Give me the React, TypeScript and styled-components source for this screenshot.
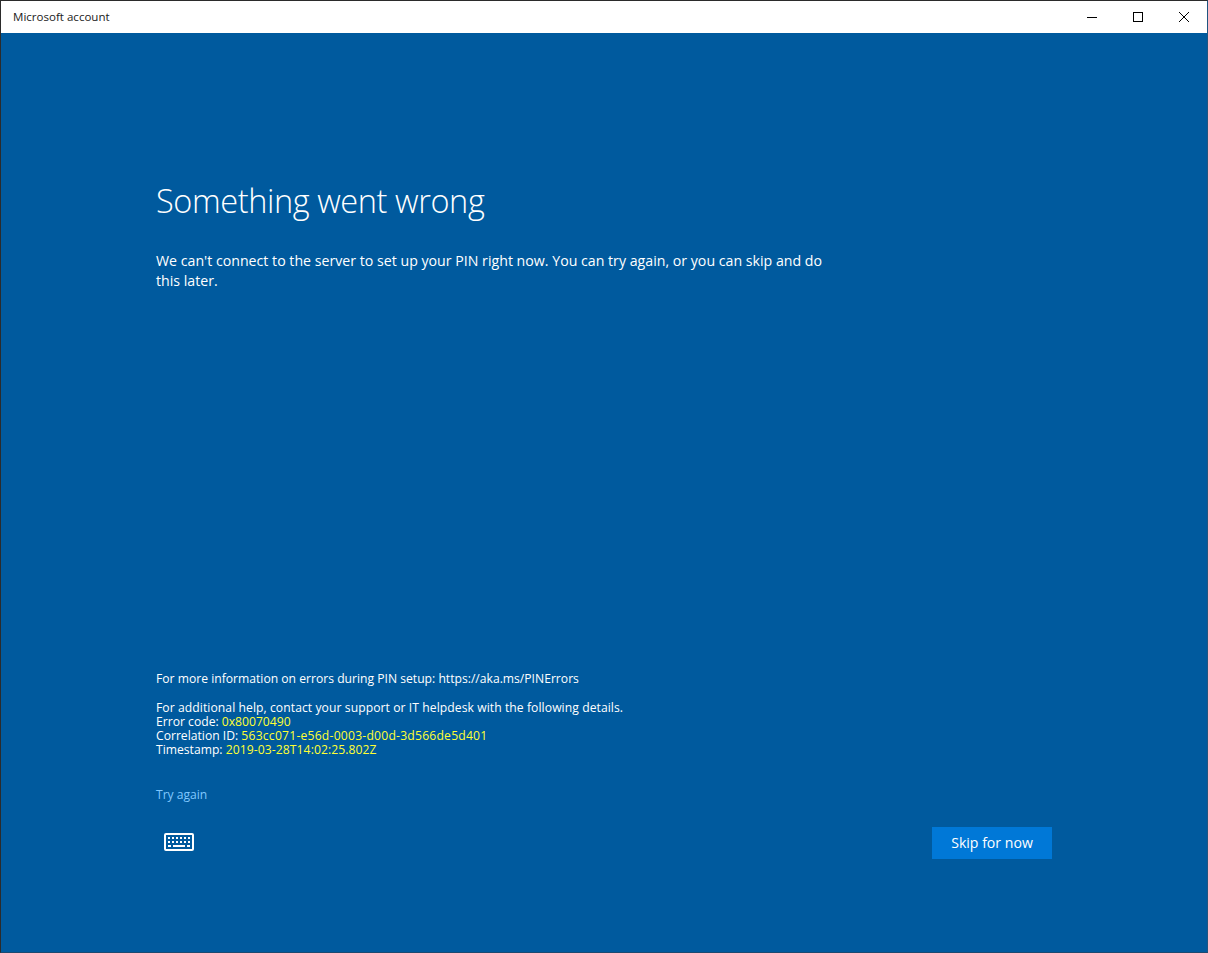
import React from "react";
import styled, { createGlobalStyle } from "styled-components";

const Global = createGlobalStyle`
  html, body { margin: 0; padding: 0; background: #005a9e; }
  #root { width: 1208px; height: 953px; }
`;
const Window = styled.div`
  box-sizing: border-box; width: 1208px; height: 953px; display: flex; flex-direction: column;
  border: 1px solid #2b2b2b; border-bottom-color: #1c4a70; border-right-color: #1f5580;
  font-family: "Open Sans", "Noto Sans", sans-serif; background: #005a9e; overflow: hidden;
`;
const TitleBar = styled.div`
  height: 32px; flex: none; background: #fff; display: flex; align-items: center; justify-content: space-between;
`;
const WindowTitle = styled.span`
  margin-left: 12px; font-size: 11.55px; color: #1a1a1a; line-height: 32px;
`;
const Controls = styled.div`display: flex;`;
const ControlButton = styled.div`
  width: 46px; height: 32px; display: flex; align-items: center; justify-content: center;
`;
const Main = styled.main`
  flex: 1; display: flex; flex-direction: column; padding: 0 155px; color: #fff;
`;
const Heading = styled.h1`
  margin: 145px 0 0; font-size: 32.5px; font-weight: 300; line-height: 46px; letter-spacing: -0.4px; color: #fff;
`;
const Lead = styled.p`
  margin: 26.5px 0 0; width: 680px; font-size: 14.18px; line-height: 20.5px;
`;
const Details = styled.div`
  margin-top: auto; font-size: 12.15px; line-height: 14px;
`;
const DetailGap = styled.div`margin-bottom: 15px;`;
const DetailLine = styled.div<{ $tracking?: number }>`
  letter-spacing: ${(p) => p.$tracking ?? 0}px;
`;
const Value = styled.span<{ $tracking?: number }>`
  color: #ffff33; letter-spacing: ${(p) => p.$tracking ?? 0}px;
`;
const Link = styled.a`
  display: block; margin-top: 30px; font-size: 12.1px; line-height: 16px; color: #80c8ff;
`;
const Footer = styled.div`
  margin: 24px 0 93px; height: 32px; display: flex; align-items: center; justify-content: space-between;
`;
const KeyboardButton = styled.div`
  margin: -2px 0 0 8px; width: 30px; height: 18px; display: flex;
`;
const SkipButton = styled.button`
  width: 120px; height: 32px; border: 0; padding: 0 0 2px; background: #0078d7; color: #fff;
  font-family: inherit; font-size: 14.1px;
`;

const Keyboard = () => (
  <svg width="30" height="18" viewBox="0 0 30 18" fill="none">
    <rect x="1" y="1" width="28" height="16" rx="1" stroke="#fff" strokeWidth="2" />
    <g fill="#fff">
      {[4, 8, 12, 16, 20, 24].map((x) => <rect key={x} x={x} y="4" width="2" height="2" />)}
      {[4, 8, 12, 16, 20, 24].map((x) => <rect key={x} x={x} y="8" width="2" height="2" />)}
      <rect x="4" y="12" width="3" height="2" />
      <rect x="9" y="12" width="12" height="2" />
      <rect x="23" y="12" width="3" height="2" />
    </g>
  </svg>
);

export default function App() {
  return (
    <Window>
      <Global />
      <TitleBar>
        <WindowTitle>Microsoft account</WindowTitle>
        <Controls>
          <ControlButton>
            <svg width="10" height="10" viewBox="0 0 10 10"><path d="M0 5.5h10" stroke="#000" /></svg>
          </ControlButton>
          <ControlButton>
            <svg width="10" height="10" viewBox="0 0 10 10"><rect x=".5" y=".5" width="9" height="9" fill="none" stroke="#000" /></svg>
          </ControlButton>
          <ControlButton>
            <svg width="10" height="10" viewBox="0 0 10 10"><path d="M0 0l10 10M10 0L0 10" stroke="#000" /></svg>
          </ControlButton>
        </Controls>
      </TitleBar>
      <Main>
        <Heading>Something went wrong</Heading>
        <Lead>We can't connect to the server to set up your PIN right now. You can try again, or you can skip and do this later.</Lead>
        <Details>
          <DetailGap>For more information on errors during PIN setup: https://aka.ms/PINErrors</DetailGap>
          <DetailLine $tracking={0.07}>For additional help, contact your support or IT helpdesk with the following details.</DetailLine>
          <DetailLine>Error code: <Value>0x80070490</Value></DetailLine>
          <DetailLine>Correlation ID: <Value $tracking={0.22}>563cc071-e56d-0003-d00d-3d566de5d401</Value></DetailLine>
          <DetailLine>Timestamp: <Value $tracking={0.08}>2019-03-28T14:02:25.802Z</Value></DetailLine>
        </Details>
        <Link>Try again</Link>
        <Footer>
          <KeyboardButton><Keyboard /></KeyboardButton>
          <SkipButton>Skip for now</SkipButton>
        </Footer>
      </Main>
    </Window>
  );
}
